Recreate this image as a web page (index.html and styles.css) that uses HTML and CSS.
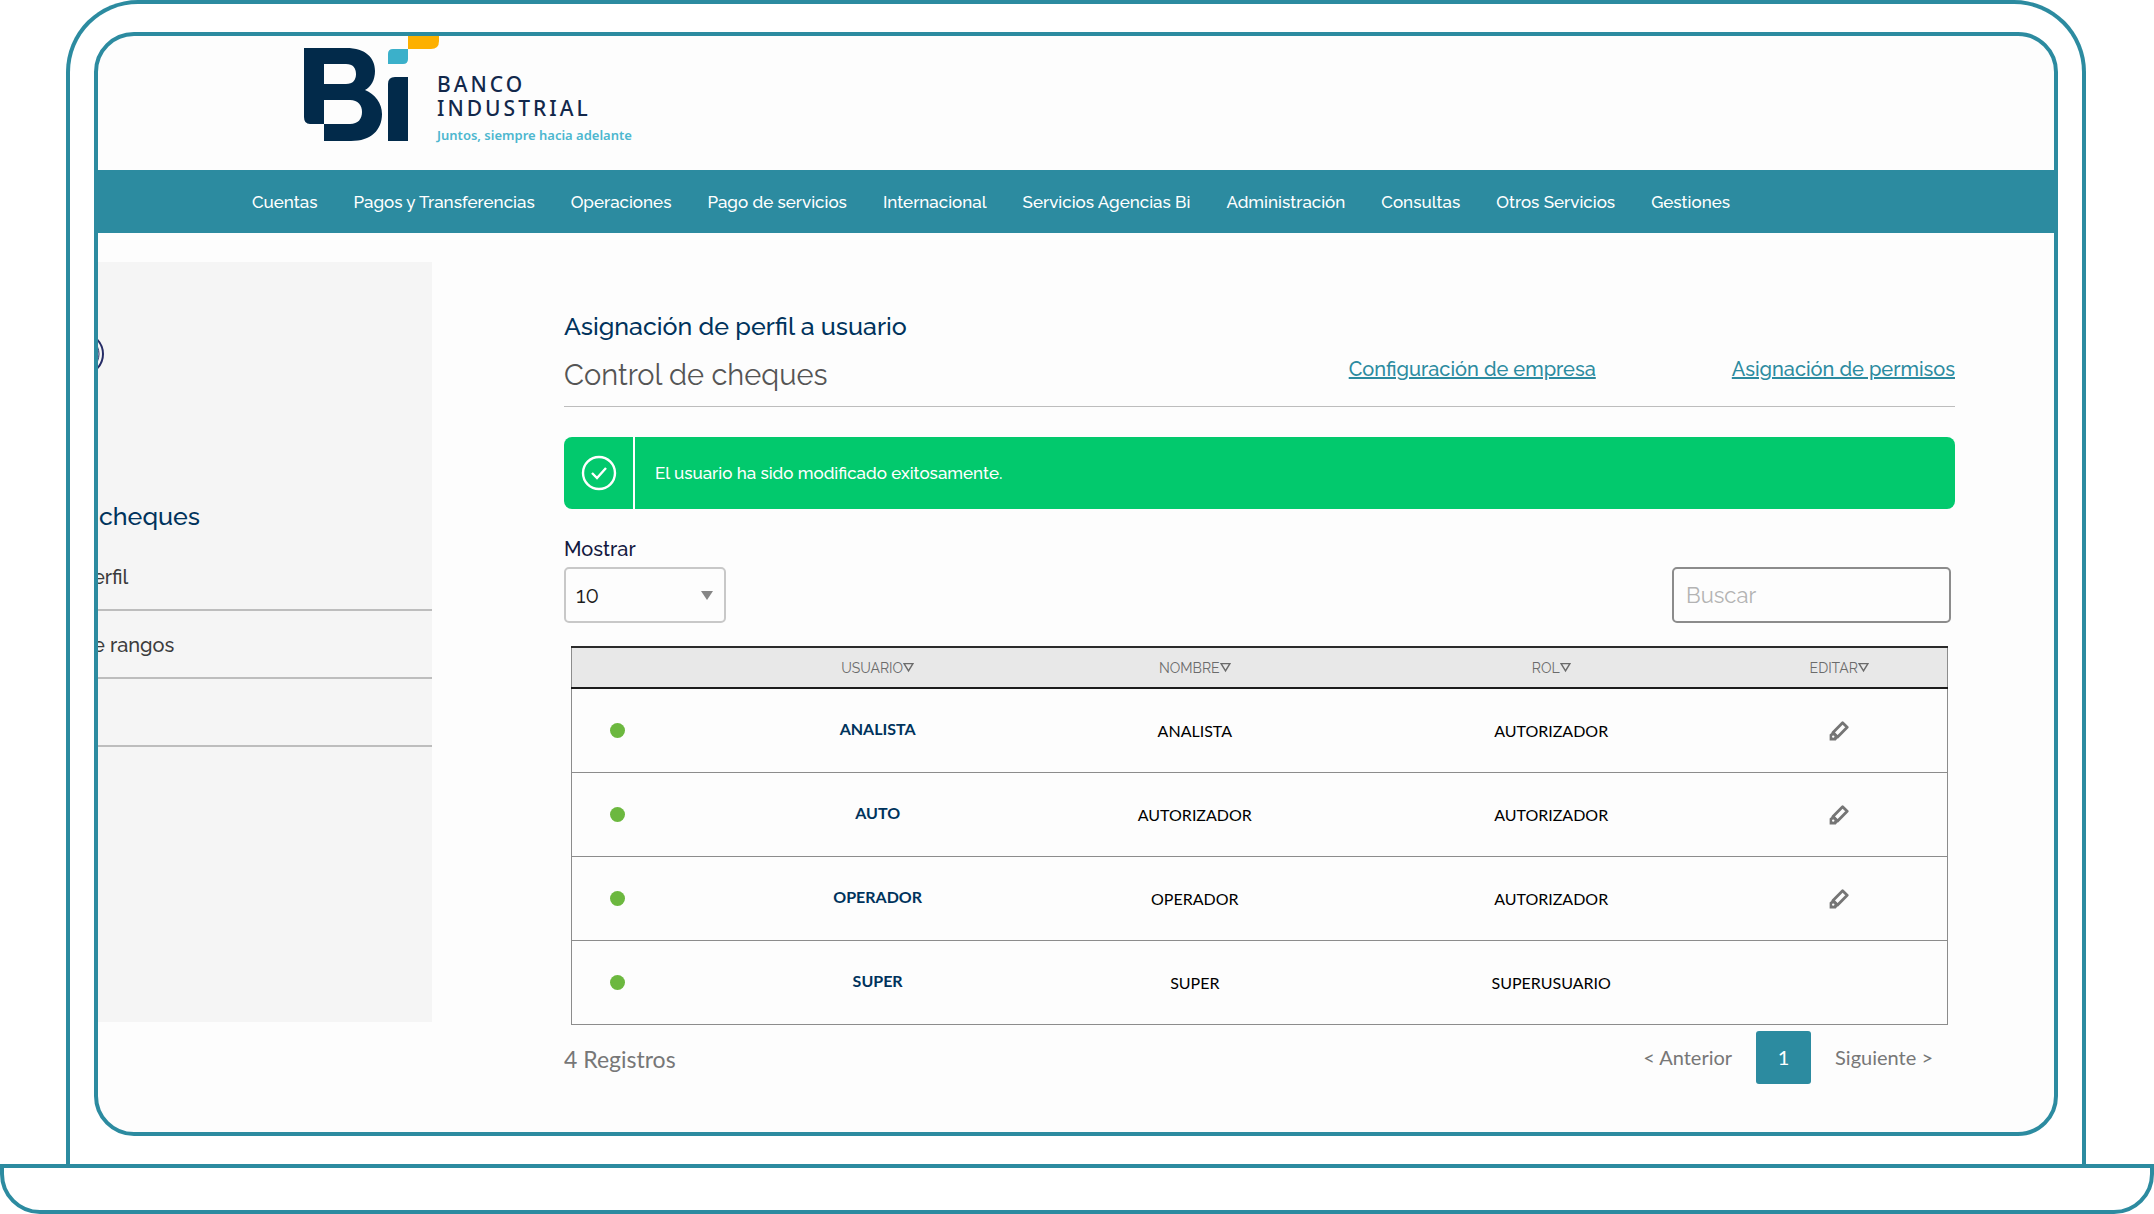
FILE: index.html
```html
<!DOCTYPE html>
<html lang="es">
<head>
<meta charset="utf-8">
<meta name="viewport" content="width=device-width, initial-scale=1">
<title>Asignación de perfil a usuario</title>
<link rel="stylesheet" href="styles.css">
</head>
<body>
<svg class="sprite" aria-hidden="true">
  <symbol id="pencil" viewBox="0 0 20 20">
    <path d="M13.6 1.8 L18.2 6.2 L8.6 16 L4 11.4 Z" fill="none" stroke="#757575" stroke-width="2.8" stroke-linejoin="round"/>
    <path d="M4.2 10.4 L9.6 15.8 L6.8 19.4 H0.6 V13.6 Z" fill="#757575"/>
    <circle cx="4.2" cy="15.6" r="1.2" fill="#fdfdfd"/>
  </symbol>
  <symbol id="sort" viewBox="0 0 10 10">
    <path d="M1 1.5 H9 L5 8 Z" fill="none" stroke="#6b6b6b" stroke-width="1.3"/>
  </symbol>
</svg>
<div class="laptop">
  <div class="lid">
    <div class="screen">
      <header class="brand">
        <svg class="brand-mark" width="134" height="106" viewBox="303 36 134 106" role="img" aria-label="Bi">
          <path fill="#022a4a" fill-rule="evenodd" d="M304 48 H346 C366 48 375 58 375 71 C375 80 371 87 365 90 C375 94 382 103 382 114 C382 130 371 141 351 141 H324 V124 H310 Q304 124 304 117 Z M324 64 V84 H346 C353 84 356 80 356 74 C356 68 353 64 346 64 Z M324 100 V124 H350 C358 124 362 119 362 112 C362 105 358 100 350 100 Z"/>
          <path fill="#022a4a" d="M388 84 Q388 77 395 77 H408 V141 H388 Z"/>
          <path fill="#3bb0ca" d="M388 54 Q388 49 393 49 H408 V59 Q408 64 403 64 H388 Z"/>
          <path fill="#fdb000" d="M408 36 H439 V41 Q439 49 431 49 H408 Z"/>
        </svg>
        <div class="brand-words">
          <span class="brand-name">BANCO</span>
          <span class="brand-name">INDUSTRIAL</span>
          <span class="brand-tag">Juntos, siempre hacia adelante</span>
        </div>
      </header>
      <nav class="menu">
        <a href="#">Cuentas</a>
        <a href="#">Pagos y Transferencias</a>
        <a href="#">Operaciones</a>
        <a href="#">Pago de servicios</a>
        <a href="#">Internacional</a>
        <a href="#">Servicios Agencias Bi</a>
        <a href="#">Administración</a>
        <a href="#">Consultas</a>
        <a href="#">Otros Servicios</a>
        <a href="#">Gestiones</a>
      </nav>
      <div class="content">
        <aside class="side">
          <svg class="side-ring" width="8" height="48" viewBox="0 0 8 48" aria-hidden="true">
            <circle cx="-16" cy="24" r="21" fill="none" stroke="#252c66" stroke-width="2"/>
            <circle cx="-16" cy="24" r="17" fill="none" stroke="#252c66" stroke-width="1"/>
          </svg>
          <h2>cheques</h2>
          <ul>
            <li><a href="#">erfil</a></li>
            <li><a href="#">e rangos</a></li>
            <li></li>
          </ul>
        </aside>
        <main class="main">
          <div class="heading">
            <div>
              <h1>Asignación de perfil a usuario</h1>
              <p>Control de cheques</p>
            </div>
            <div class="heading-links">
              <a href="#">Configuración de empresa</a>
              <a href="#">Asignación de permisos</a>
            </div>
          </div>
          <div class="alert" role="status">
            <div class="alert-icon">
              <svg width="36" height="36" viewBox="0 0 36 36" fill="none" stroke="#fff" stroke-width="2.4" aria-hidden="true">
                <circle cx="18" cy="18" r="16"/>
                <path d="M11 18 L16 23 L25 13"/>
              </svg>
            </div>
            <p>El usuario ha sido modificado exitosamente.</p>
          </div>
          <label class="show-label" for="count">Mostrar</label>
          <div class="tools">
            <div class="picker"><select id="count"><option>10</option></select></div>
            <input type="search" placeholder="Buscar" aria-label="Buscar">
          </div>
          <table>
            <thead>
              <tr>
                <th class="c-state"></th>
                <th class="c-user">USUARIO<svg><use href="#sort"/></svg></th>
                <th class="c-name">NOMBRE<svg><use href="#sort"/></svg></th>
                <th class="c-role">ROL<svg><use href="#sort"/></svg></th>
                <th>EDITAR<svg><use href="#sort"/></svg></th>
              </tr>
            </thead>
            <tbody>
              <tr><td><span class="dot"></span></td><td><a href="#">ANALISTA</a></td><td>ANALISTA</td><td>AUTORIZADOR</td><td><button aria-label="Editar"><svg><use href="#pencil"/></svg></button></td></tr>
              <tr><td><span class="dot"></span></td><td><a href="#">AUTO</a></td><td>AUTORIZADOR</td><td>AUTORIZADOR</td><td><button aria-label="Editar"><svg><use href="#pencil"/></svg></button></td></tr>
              <tr><td><span class="dot"></span></td><td><a href="#">OPERADOR</a></td><td>OPERADOR</td><td>AUTORIZADOR</td><td><button aria-label="Editar"><svg><use href="#pencil"/></svg></button></td></tr>
              <tr><td><span class="dot"></span></td><td><a href="#">SUPER</a></td><td>SUPER</td><td>SUPERUSUARIO</td><td></td></tr>
            </tbody>
          </table>
          <div class="footer">
            <span class="total">4 Registros</span>
            <div class="pages">
              <button>&lt; Anterior</button>
              <button class="current">1</button>
              <button>Siguiente &gt;</button>
            </div>
          </div>
        </main>
      </div>
    </div>
  </div>
  <div class="base"></div>
</div>
</body>
</html>
```
FILE: styles.css
```css
:root {
  --teal: #2c8ba0;
  --navy: #00335c;
}

* { box-sizing: border-box; }

body {
  margin: 0;
  background: #fff;
  font-family: Raleway, Lato, sans-serif;
  color: #3c3c3c;
}

h1, h2, p, ul { margin: 0; padding: 0; }
a { text-decoration: none; color: inherit; }
button { border: 0; background: none; padding: 0; font: inherit; color: inherit; cursor: pointer; }
.sprite { display: none; }

.laptop {
  display: flex;
  flex-direction: column;
  min-height: 100vh;
}

/* Laptop frame */
.lid {
  flex: 1;
  display: flex;
  margin: 0 68px 0 66px;
  padding: 28px 24px;
  border: 4px solid var(--teal);
  border-bottom: 0;
  border-radius: 72px 72px 0 0;
}

.screen {
  flex: 1;
  min-width: 0;
  border: 4px solid var(--teal);
  border-radius: 40px;
  background: #fdfdfd;
  overflow: hidden;
}

.base {
  height: 50px;
  border: 4px solid var(--teal);
  border-radius: 0 0 40px 40px;
}

/* Brand */
.brand {
  display: flex;
  height: 134px;
  padding-left: 205px;
}

.brand-mark { flex: none; overflow: visible; }

.brand-words {
  display: flex;
  flex-direction: column;
  padding-top: 36px;
  font-family: "Noto Sans", sans-serif;
  white-space: nowrap;
}

.brand-name {
  font-size: 21px;
  line-height: 24px;
  font-weight: 500;
  letter-spacing: 3px;
  color: #12284b;
}

.brand-tag {
  margin-top: 5px;
  font-size: 13px;
  line-height: 20px;
  font-weight: 600;
  color: #4db7cf;
}

/* Main menu */
.menu {
  display: flex;
  align-items: center;
  gap: 36px;
  height: 63px;
  padding-left: 154px;
  background: var(--teal);
  color: #fff;
  font-size: 17px;
  font-weight: 500;
  white-space: nowrap;
}

.content {
  display: flex;
  padding: 29px 99px 48px 0;
}

/* Side panel */
.side {
  flex: none;
  width: 334px;
  height: 760px;
  padding-top: 68px;
  background: #f5f5f5;
  overflow: hidden;
}

.side-ring { display: block; }

.side h2 {
  margin-top: 120px;
  padding-left: 1px;
  font-size: 25px;
  line-height: 36px;
  font-weight: 500;
  color: var(--navy);
}

.side ul {
  margin-top: 9px;
  list-style: none;
  font-size: 20px;
  font-weight: 500;
}

.side li {
  height: 68px;
  padding-top: 19px;
  line-height: 30px;
  border-bottom: 2px solid #bdbdbd;
}

.side li a { margin-left: -5px; }

/* Main column */
.main {
  flex: 1;
  min-width: 0;
  margin-left: 132px;
}

.heading {
  display: flex;
  justify-content: space-between;
  padding: 44px 0 11px;
  border-bottom: 1px solid #bdbdbd;
}

.heading h1 {
  font-size: 25px;
  line-height: 40px;
  font-weight: 500;
  color: var(--navy);
}

.heading p {
  padding-top: 9px;
  font-size: 29px;
  line-height: 40px;
  color: #555;
}

.heading-links {
  display: flex;
  gap: 136px;
  padding-top: 48px;
  font-size: 20px;
  line-height: 30px;
  font-weight: 500;
}

.heading-links a { color: var(--teal); text-decoration: underline; }

.alert {
  display: flex;
  align-items: center;
  height: 72px;
  margin-top: 30px;
  border-radius: 8px;
  background: #02c96d;
  color: #fff;
  font-size: 17px;
  font-weight: 500;
}

.alert-icon {
  display: flex;
  align-items: center;
  justify-content: center;
  align-self: stretch;
  width: 71px;
  border-right: 2px solid #fff;
}

.alert p { padding-left: 20px; }

.show-label {
  display: block;
  margin-top: 25px;
  font-size: 20px;
  line-height: 30px;
  font-weight: 500;
  color: #14193f;
}

.tools {
  display: flex;
  justify-content: space-between;
  margin: 3px 4px 23px 0;
}

.picker { position: relative; }

.picker::after {
  content: "";
  position: absolute;
  right: 13px;
  top: 24px;
  border: 6px solid transparent;
  border-top: 9px solid #868686;
  border-bottom: 0;
  pointer-events: none;
}

.tools select,
.tools input {
  height: 56px;
  border-radius: 5px;
  background: #fdfdfd;
  font: 22px Raleway, Lato, sans-serif;
  color: #1c1c1c;
  appearance: none;
}

.tools select {
  width: 162px;
  padding: 0 10px;
  border: 2px solid #c8c8c8;
}

.tools input {
  width: 279px;
  padding: 0 12px;
  border: 2px solid #8c8c8c;
}

.tools input::placeholder { color: #b3b3b3; }

/* Users table */
table {
  width: calc(100% - 14px);
  margin: 0 7px;
  table-layout: fixed;
  border-collapse: collapse;
  border: 1px solid #8c8c8c;
  font-family: Lato, sans-serif;
  font-size: 16px;
  color: #000;
  text-align: center;
}

thead tr {
  height: 41px;
  border-top: 2px solid #2b2b2b;
  border-bottom: 2px solid #1c1c1c;
  background: #e8e8e8;
}

th {
  padding: 0;
  font-family: Raleway, Lato, sans-serif;
  font-size: 14px;
  font-weight: 400;
  color: #6b6b6b;
}

th svg { width: 11px; height: 11px; }
.c-state { width: 12%; }
.c-user { width: 20.5%; }
.c-name { width: 25.6%; }
.c-role { width: 26.2%; }

td {
  height: 84px;
  padding: 0;
  border-bottom: 1px solid #8c8c8c;
}

td a {
  display: block;
  padding-bottom: 3px;
  font-weight: 700;
  color: var(--navy);
}

td button { display: inline-block; vertical-align: middle; }
td svg { display: block; width: 20px; height: 20px; }

.dot {
  display: block;
  width: 15px;
  height: 15px;
  margin-left: 38px;
  border-radius: 50%;
  background: #6cb83f;
}

/* Table footer */
.footer {
  display: flex;
  justify-content: space-between;
  align-items: center;
  padding: 6px 22px 0 0;
  font-family: Lato, sans-serif;
  color: #777;
}

.total { padding-top: 4px; font-size: 23px; }

.pages {
  display: flex;
  align-items: center;
  gap: 24px;
  font-size: 20px;
}

.pages .current {
  width: 55px;
  height: 53px;
  border-radius: 3px;
  background: var(--teal);
  color: #fff;
}
```
